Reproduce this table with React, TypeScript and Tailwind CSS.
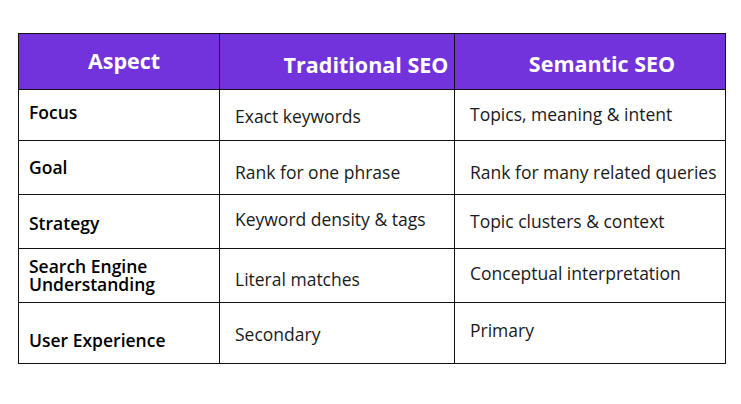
const rows = [
  {
    h: "h-[51px]",
    label: ["Focus"],
    labelPt: "pt-[13px]",
    trad: "Exact keywords",
    tradPt: "pt-[15.5px]",
    sem: "Topics, meaning & intent",
    semPt: "pt-[14px]",
  },
  {
    h: "h-[54px]",
    label: ["Goal"],
    labelPt: "pt-[16.5px]",
    trad: "Rank for one phrase",
    tradPt: "pt-[20.5px]",
    sem: "Rank for many related queries",
    semPt: "pt-[20.5px]",
  },
  {
    h: "h-[54px]",
    label: ["Strategy"],
    labelPt: "pt-[19px]",
    trad: "Keyword density & tags",
    tradPt: "pt-[14px]",
    sem: "Topic clusters & context",
    semPt: "pt-[15.5px]",
  },
  {
    h: "h-[54px]",
    label: ["Search Engine", "Understanding"],
    labelPt: "pt-[8px]",
    trad: "Literal matches",
    tradPt: "pt-[20px]",
    sem: "Conceptual interpretation",
    semPt: "pt-[14px]",
  },
  {
    h: "h-[60px]",
    label: ["User Experience"],
    labelPt: "pt-[28px]",
    trad: "Secondary",
    tradPt: "pt-[21px]",
    sem: "Primary",
    semPt: "pt-[17px]",
  },
];

export default function App() {
  return (
    <div className="w-[741px] h-[404px] bg-white pt-[33px] pl-[18px] font-['Open_Sans',sans-serif]">
      <div className="w-[708px] border border-[#111]">
        {/* header */}
        <div className="flex h-[56px] bg-[#7233dd] border-b border-[#111] text-white font-bold text-[21.5px] leading-[24px]">
          <div className="w-[201px] border-r border-[#111] pt-[15px] pl-[10px] text-center whitespace-nowrap">Aspect</div>
          <div className="w-[235px] border-r border-[#111] pt-[19px] pl-[58px] text-center whitespace-nowrap">Traditional SEO</div>
          <div className="flex-1 pt-[18px] pl-[24px] text-center whitespace-nowrap">Semantic SEO</div>
        </div>

        {rows.map((r, i) => (
          <div
            key={r.trad}
            className={`flex ${r.h} ${i < rows.length - 1 ? "border-b border-[#111]" : ""}`}
          >
            <div className={`w-[201px] border-r border-[#111] pl-[10px] ${r.labelPt} text-[17.5px] leading-[18px] font-semibold text-black`}>
              {r.label.map((l) => (
                <div key={l}>{l}</div>
              ))}
            </div>
            <div className={`w-[235px] border-r border-[#111] pl-[15px] ${r.tradPt} text-[17.5px] leading-[20px] text-[#1a1a1a] whitespace-nowrap`}>
              {r.trad}
            </div>
            <div className={`flex-1 pl-[15px] ${r.semPt} text-[17.5px] leading-[20px] text-[#1a1a1a] whitespace-nowrap`}>
              {r.sem}
            </div>
          </div>
        ))}
      </div>
    </div>
  );
}
